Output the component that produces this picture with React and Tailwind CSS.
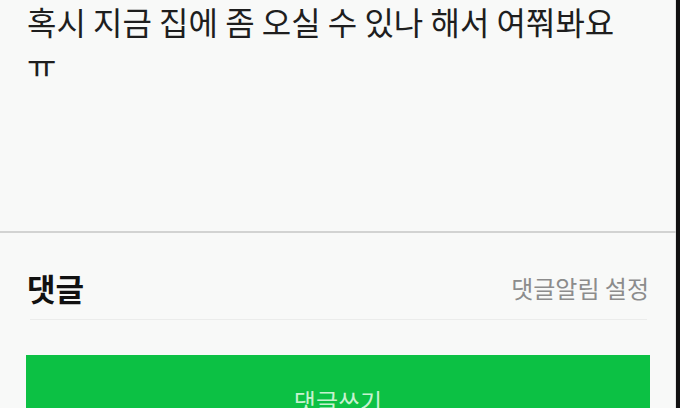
export default function App() {
  const font = { fontFamily: '"Noto Sans CJK KR", "Noto Sans", sans-serif' }

  return (
    <div className="flex w-[680px] h-[408px] overflow-hidden bg-[#f8f9f8]" style={font}>
      <div className="flex-1 flex flex-col">
        {/* Post body */}
        <div className="shrink-0 h-[231px] px-[27px] border-r border-[#e4e5e4]">
          <p className="text-[32px] leading-[43px] text-[#1e1e1e]">
            혹시 지금 집에 좀 오실 수 있나 해서 여쭤봐요
            <br />
            ㅠ
          </p>
        </div>
        <div className="shrink-0 h-[2px] bg-[#d2d3d2]" />

        {/* Comment header */}
        <div className="border-r border-[#e4e5e4] flex-1 flex flex-col">
          <div className="shrink-0 h-[86px] pt-[24px] pl-[27px] pr-[26px] flex items-center justify-between">
            <span className="text-[31px] font-bold text-[#111]">댓글</span>
            <span className="text-[24px] text-[#8c8c8c]">댓글알림 설정</span>
          </div>
          <div className="shrink-0 h-px ml-[30px] mr-[28px] bg-[#ebeceb]" />

          <div className="shrink-0 mt-[35px] ml-[26px] w-[624px] h-[100px] bg-[#0cc144] flex justify-center pt-[31px]">
            <span className="text-[24px] leading-[30px] text-[#c6f2cf]">댓글쓰기</span>
          </div>
        </div>
      </div>
      <div className="w-[4px] bg-[#111]" />
    </div>
  )
}
